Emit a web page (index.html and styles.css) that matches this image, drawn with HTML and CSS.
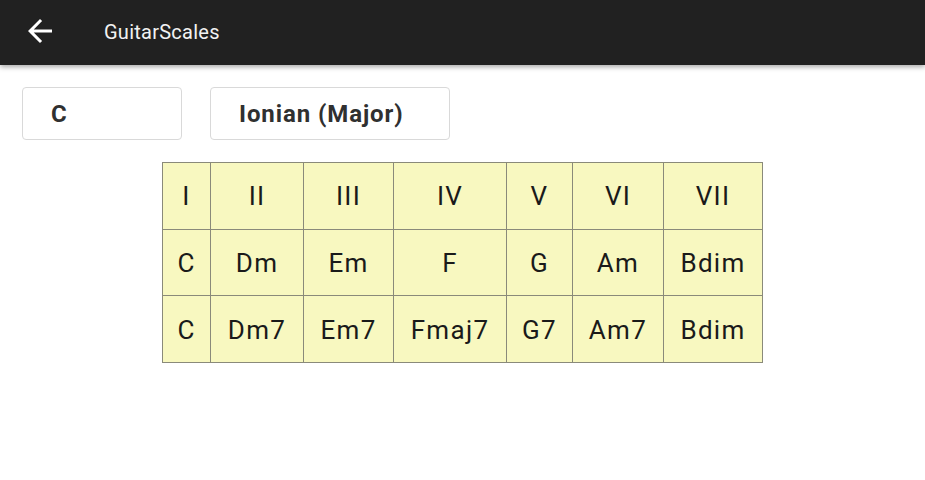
FILE: index.html
```html
<!DOCTYPE html>
<html>
<head>
<meta charset="utf-8">
<link rel="stylesheet" href="styles.css">
</head>
<body>
<header class="toolbar">
  <svg class="back" viewBox="0 0 24 24" width="36" height="36"><path fill="#fff" d="M20 11H7.83l5.59-5.59L12 4l-8 8 8 8 1.41-1.41L7.83 13H20v-2z"/></svg>
  <span class="title">GuitarScales</span>
</header>
<main class="content">
  <div class="selectors">
    <div class="spinner key">C</div>
    <div class="spinner mode">Ionian (Major)</div>
  </div>
  <div class="table-wrap">
    <table class="chords">
      <colgroup>
        <col class="c1"><col class="c2"><col class="c3"><col class="c4"><col class="c5"><col class="c6"><col class="c7">
      </colgroup>
      <tr><td>I</td><td>II</td><td>III</td><td>IV</td><td>V</td><td>VI</td><td>VII</td></tr>
      <tr><td>C</td><td>Dm</td><td>Em</td><td>F</td><td>G</td><td>Am</td><td>Bdim</td></tr>
      <tr><td>C</td><td>Dm7</td><td>Em7</td><td>Fmaj7</td><td>G7</td><td>Am7</td><td>Bdim</td></tr>
    </table>
  </div>
</main>
</body>
</html>
```
FILE: styles.css
```css
html, body { margin: 0; padding: 0; background: #fff; }
body { font-family: Roboto, "Liberation Sans", sans-serif; width: 925px; height: 480px; overflow: hidden; }
.toolbar {
  height: 65px;
  background: #212121;
  display: flex;
  align-items: center;
  box-shadow: 0 2px 5px rgba(0,0,0,0.35);
  position: relative;
}
.back { margin-left: 22px; margin-top: -4px; }
.title { color: #f2f2f2; font-size: 20px; letter-spacing: 0.25px; margin-left: 46px; margin-top: -2px; }
.content { padding: 22px 0 0 22px; }
.selectors { display: flex; gap: 28px; }
.spinner {
  box-sizing: border-box;
  height: 53px;
  border: 1px solid #d9d9d9;
  border-radius: 4px;
  display: flex;
  align-items: center;
  padding-left: 28px;
  font-size: 24px;
  letter-spacing: 0.9px;
  font-weight: bold;
  color: #303030;
}
.key { width: 160px; }
.mode { width: 240px; }
.table-wrap { margin-top: 22px; padding-left: 140px; }
.chords {
  border-collapse: collapse;
  table-layout: fixed;
  width: 601px;
  background: #f8f8c0;
  font-size: 26px;
  letter-spacing: 1.3px;
  color: #1a1a1a;
}
.c1 { width: 48px; }
.c2 { width: 93px; }
.c3 { width: 90px; }
.c4 { width: 113px; }
.c5 { width: 66px; }
.c6 { width: 91px; }
.c7 { width: 99px; }
.chords td {
  border: 1.5px solid #8a8a7a;
  height: 66.7px;
  padding: 1px 0 0;
  text-align: center;
  box-sizing: border-box;
  white-space: nowrap;
}
```
